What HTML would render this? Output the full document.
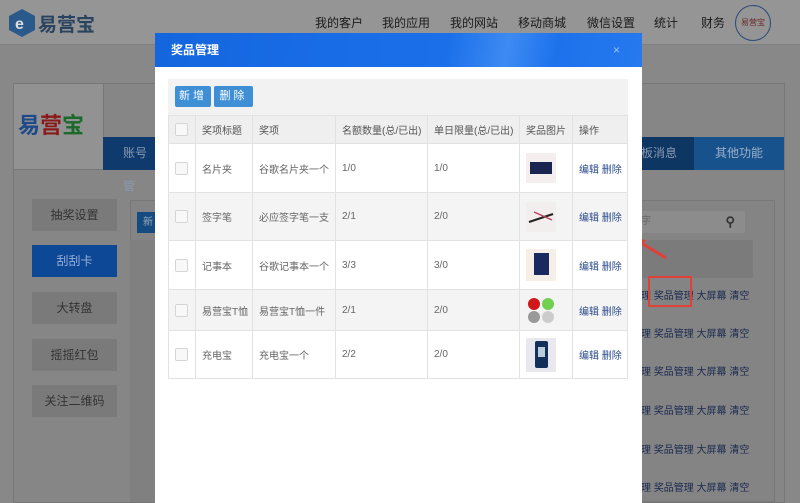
<!DOCTYPE html>
<html><head><meta charset="utf-8"><style>
*{margin:0;padding:0;box-sizing:border-box}
body{width:800px;height:502px;overflow:hidden;position:relative;background:#888;font-family:"Liberation Sans","Noto Sans CJK SC",sans-serif;font-size:11px;color:#333}
.a{position:absolute}
.hdr{left:0;top:0;width:800px;height:45px;background:#959595;border-bottom:1px solid #808080}
.nav span{position:absolute;top:14px;font-size:12px;color:#1a1a1a}
.sb{position:absolute;left:32px;width:85px;height:32px;background:#7a7a7a;color:#333;text-align:center;line-height:32px;font-size:12px}
.rr{position:absolute;left:641px;font-size:10px;color:#1a2a50;white-space:nowrap}
.modal{left:155px;top:33px;width:487px;height:470px;background:#fff}
.tb{height:34px;background:linear-gradient(100deg,#1466de 0%,#1b70ea 60%,#3d8af2 72%,#1d72ec 82%,#2679ee 100%);color:#fff;font-size:12px;font-weight:bold;line-height:34px;padding-left:16px}
.btn{position:absolute;top:86px;height:21px;background:#3e8fd6;color:#fff;font-size:11px;line-height:21px;text-align:center;border-radius:2px;letter-spacing:3px}
table{position:absolute;left:168px;top:115px;width:460px;border-collapse:collapse;background:#fff}
td,th{border:1px solid #e2e2e2;font-weight:normal;text-align:left;padding-left:6px;font-size:10px;color:#666;vertical-align:middle}
th{background:#efefef;height:28px;color:#555}
.cb{display:inline-block;width:13px;height:13px;border:1px solid #d5d5d5;background:#f8f8f8;border-radius:2px;vertical-align:middle}
.op{color:#2a4a8a}
.g{background:#f4f4f4}
</style></head><body>
<div class="a hdr"></div>
<svg class="a" style="left:8px;top:8px" width="28" height="30" viewBox="0 0 28 30"><polygon points="14,1 27,8 27,22 14,29 1,22 1,8" fill="#2a5a8c"/><text x="7" y="21" font-size="16" fill="#ddd" font-family="Liberation Sans" font-weight="bold">e</text></svg>
<div class="a" style="left:38px;top:10px;font-size:19px;color:#2a4460;font-weight:bold">易营宝</div>
<div class="nav"><span style="left:315px">我的客户</span><span style="left:382px">我的应用</span><span style="left:450px">我的网站</span><span style="left:518px">移动商城</span><span style="left:587px">微信设置</span><span style="left:654px">统计</span><span style="left:701px">财务</span></div>
<div class="a" style="left:735px;top:5px;width:36px;height:36px;border:1px solid #2a4a7a;border-radius:50%;font-size:8px;line-height:34px;text-align:center;color:#6a2a2a">易营宝</div>
<div class="a" style="left:13px;top:83px;width:772px;height:420px;border:1px solid #777;background:#868686"></div>
<div class="a" style="left:13px;top:83px;width:91px;height:87px;background:#929292;border:1px solid #777;font-size:22px;font-weight:bold;padding:24px 0 0 4px"><span style="color:#1e4a8a">易</span><span style="color:#8a1a1a">营</span><span style="color:#1a6a2a">宝</span></div>
<div class="a" style="left:103px;top:137px;width:52px;height:33px;background:#0e3a6e;color:#8a9ab0;font-size:12px;line-height:33px;padding-left:20px">账号管</div>
<div class="a" style="left:641px;top:137px;width:53px;height:33px;background:#0d3662;color:#8a9ab0;font-size:12px;line-height:33px">板消息</div>
<div class="a" style="left:694px;top:137px;width:90px;height:33px;background:#18528c;color:#9ab0c8;font-size:12px;line-height:33px;text-align:center">其他功能</div>
<div class="sb" style="top:199px">抽奖设置</div>
<div class="sb" style="top:245px;background:#0c4896;color:#9ab0d8">刮刮卡</div>
<div class="sb" style="top:292px">大转盘</div>
<div class="sb" style="top:339px">摇摇红包</div>
<div class="sb" style="top:385px">关注二维码</div>
<div class="a" style="left:130px;top:200px;width:645px;height:302px;background:#848484;border:1px solid #787878"></div>
<div class="a" style="left:137px;top:212px;width:22px;height:21px;background:#154b80;color:#9ab;font-size:10px;line-height:21px;padding-left:6px">新</div>
<div class="a" style="left:641px;top:211px;width:104px;height:22px;background:#8c8c8c;color:#666;font-size:10px;line-height:22px">字<span style="position:absolute;right:10px;font-size:13px;color:#333;font-weight:bold">&#9906;</span></div>
<div class="a" style="left:641px;top:240px;width:112px;height:38px;background:#7b7b7b"></div>
<div class="a" style="left:130px;top:240px;width:25px;height:262px;background:#808080"></div>
<div class="rr" style="top:287px">理 奖品管理 大屏幕 清空</div>
<div class="rr" style="top:325px">理 奖品管理 大屏幕 清空</div>
<div class="rr" style="top:363px">理 奖品管理 大屏幕 清空</div>
<div class="rr" style="top:402px">理 奖品管理 大屏幕 清空</div>
<div class="rr" style="top:441px">理 奖品管理 大屏幕 清空</div>
<div class="rr" style="top:479px">理 奖品管理 大屏幕 清空</div>
<div class="a" style="left:648px;top:276px;width:44px;height:31px;border:2px solid #e0403a"></div>
<svg class="a" style="left:632px;top:236px" width="40" height="28"><line x1="6" y1="5" x2="34" y2="22" stroke="#e0403a" stroke-width="3"/><polygon points="2,2 14,4 8,12" fill="#e0403a"/></svg>
<div class="a modal"><div class="tb">奖品管理<span style="position:absolute;right:22px;font-weight:normal;color:#9bc0f5">×</span></div></div>
<div class="a" style="left:168px;top:79px;width:460px;height:36px;background:#f2f2f2"></div>
<div class="btn" style="left:175px;width:36px">新增</div>
<div class="btn" style="left:214px;width:39px">删除</div>
<table>
<tr><th style="width:27px"><span class="cb"></span></th><th style="width:57px">奖项标题</th><th style="width:83px">奖项</th><th style="width:92px">名额数量(总/已出)</th><th style="width:92px">单日限量(总/已出)</th><th style="width:53px">奖品图片</th><th>操作</th></tr>
<tr style="height:49px"><td><span class="cb"></span></td><td>名片夹</td><td>谷歌名片夹一个</td><td>1/0</td><td>1/0</td><td><div style="width:30px;height:30px;background:#f5eeee;position:relative"><div style="position:absolute;left:4px;top:9px;width:22px;height:12px;background:#1a2450"></div></div></td><td class="op">编辑 删除</td></tr>
<tr style="height:48px" class="g"><td><span class="cb"></span></td><td>签字笔</td><td>必应签字笔一支</td><td>2/1</td><td>2/0</td><td><svg width="30" height="30" style="background:#f3eeee;display:block"><line x1="3" y1="20" x2="27" y2="12" stroke="#222" stroke-width="2"/><line x1="8" y1="10" x2="26" y2="18" stroke="#c04060" stroke-width="1.5"/></svg></td><td class="op">编辑 删除</td></tr>
<tr style="height:49px"><td><span class="cb"></span></td><td>记事本</td><td>谷歌记事本一个</td><td>3/3</td><td>3/0</td><td><div style="width:30px;height:32px;background:#f5efe8;position:relative"><div style="position:absolute;left:8px;top:4px;width:15px;height:22px;background:#1a2a60"></div></div></td><td class="op">编辑 删除</td></tr>
<tr style="height:41px" class="g"><td><span class="cb"></span></td><td>易营宝T恤</td><td>易营宝T恤一件</td><td>2/1</td><td>2/0</td><td><svg width="30" height="28" style="display:block"><circle cx="8" cy="8" r="6" fill="#d01818"/><circle cx="22" cy="8" r="6" fill="#70d050"/><circle cx="8" cy="21" r="6" fill="#999"/><circle cx="22" cy="21" r="6" fill="#ccc"/></svg></td><td class="op">编辑 删除</td></tr>
<tr style="height:48px"><td><span class="cb"></span></td><td>充电宝</td><td>充电宝一个</td><td>2/2</td><td>2/0</td><td><div style="width:30px;height:34px;background:#e8e8ee;position:relative"><div style="position:absolute;left:9px;top:3px;width:13px;height:27px;background:#12305a;border-radius:2px"><div style="margin:6px 3px;width:7px;height:10px;background:#bcd"></div></div></div></td><td class="op">编辑 删除</td></tr>
</table>
</body></html>
